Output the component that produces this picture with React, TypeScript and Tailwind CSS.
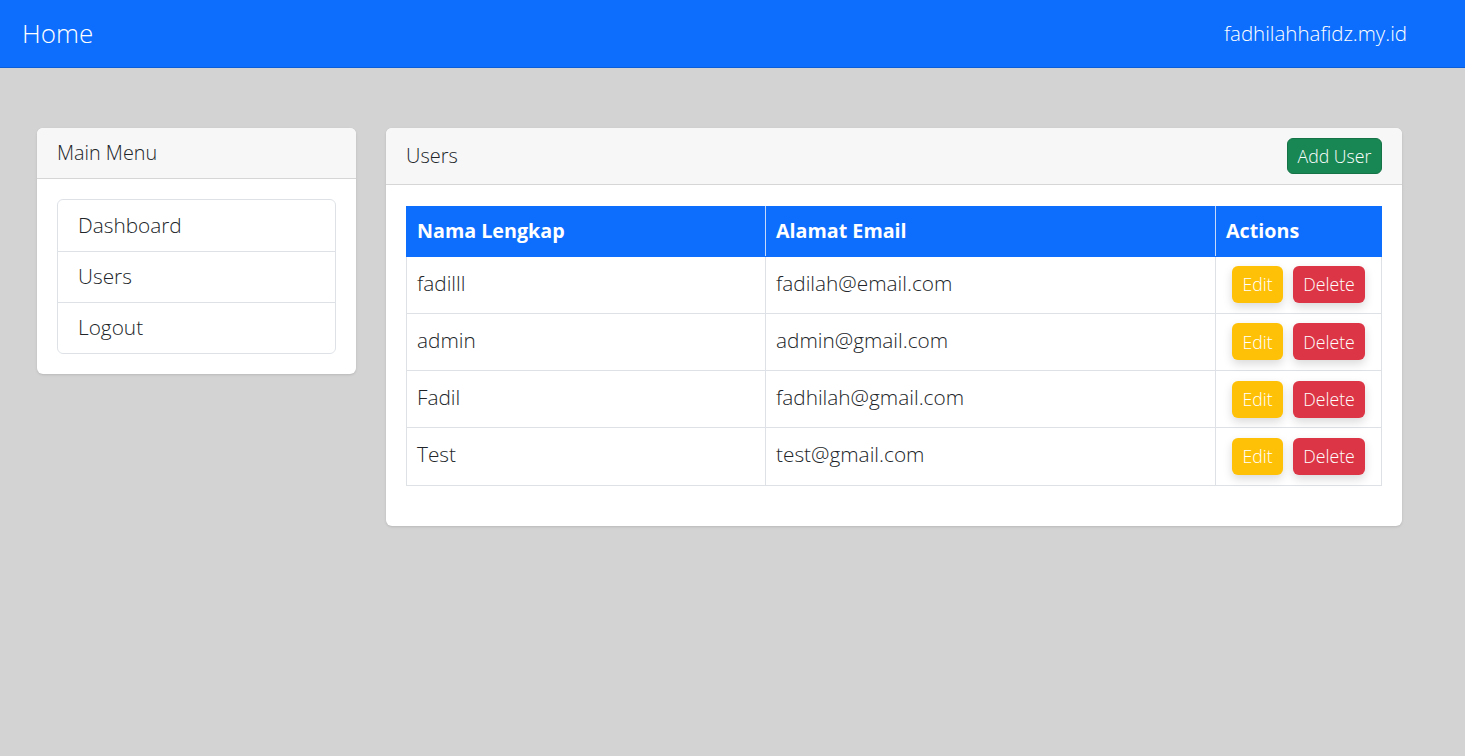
const users = [
    { name: "fadilll", email: "fadilah@email.com" },
    { name: "admin", email: "admin@gmail.com" },
    { name: "Fadil", email: "fadhilah@gmail.com" },
    { name: "Test", email: "test@gmail.com" },
];

const menu = ["Dashboard", "Users", "Logout"];

const App = () => {
    return (
        <div className="min-h-[756px] bg-[#d3d3d3] text-[#212529] font-light" style={{ fontFamily: "'Open Sans', Lato, sans-serif" }}>
            {/* navbar */}
            <div className="h-[68px] bg-[#0d6efd] border-b border-[#0b5ed7] flex items-center justify-between pl-[22px] pr-[58px] text-white">
                <span className="text-[26px]">Home</span>
                <span className="text-[20.5px]">fadhilahhafidz.my.id</span>
            </div>

            <div className="flex items-start gap-[30px] pl-[37px] pt-[60px]">
                {/* sidebar */}
                <div className="w-[319px] bg-white rounded-md shadow-sm overflow-hidden">
                    <div className="h-[51px] bg-[#f7f7f7] border-b border-[#d6d6d6] flex items-center px-[20px] text-[19.8px]">
                        Main Menu
                    </div>
                    <div className="p-[20px]">
                        <div className="border border-[#dee2e6] rounded-md">
                            {menu.map((item, index) => (
                                <div
                                    key={index}
                                    className={`h-[51px] flex items-center px-[20px] text-[20.8px] ${index > 0 ? "border-t border-[#dee2e6]" : ""}`}
                                >
                                    {item}
                                </div>
                            ))}
                        </div>
                    </div>
                </div>

                {/* users card */}
                <div className="w-[1016px] bg-white rounded-md shadow-sm overflow-hidden">
                    <div className="h-[57px] bg-[#f7f7f7] border-b border-[#d6d6d6] flex items-center justify-between px-[20px]">
                        <span className="text-[20px]">Users</span>
                        <button className="h-[36px] w-[95px] rounded-md bg-[#198754] border border-[#157347] text-white text-[17.7px] font-light">
                            Add User
                        </button>
                    </div>
                    <div className="px-[20px] pt-[21px] pb-[40px]">
                        <table className="w-full border-collapse text-[20.8px]">
                            <thead>
                                <tr className="h-[49.5px] bg-[#0d6efd] text-white text-left text-[19.7px]">
                                    <th className="w-[359px] px-[10px] font-bold border border-[#0d6efd] border-r-[#c5d9fb]">Nama Lengkap</th>
                                    <th className="w-[450px] px-[10px] font-bold border border-[#0d6efd] border-r-[#c5d9fb]">Alamat Email</th>
                                    <th className="px-[10px] font-bold border border-[#0d6efd]">Actions</th>
                                </tr>
                            </thead>
                            <tbody>
                                {users.map((user, index) => (
                                    <tr key={index} className="h-[57.3px]">
                                        <td className="border border-[#dee2e6] px-[10px] align-top pt-[11px]">{user.name}</td>
                                        <td className="border border-[#dee2e6] px-[10px] align-top pt-[11px]">{user.email}</td>
                                        <td className="border border-[#dee2e6] pl-[16px]">
                                            <div className="flex gap-[10px]">
                                                <button className="h-[37px] w-[51px] rounded-md bg-[#ffc107] text-white text-[17.7px] font-light shadow-[0_4px_10px_rgba(0,0,0,0.15)]">
                                                    Edit
                                                </button>
                                                <button className="h-[37px] w-[72px] rounded-md bg-[#dc3545] text-white text-[17.7px] font-light shadow-[0_4px_10px_rgba(0,0,0,0.15)]">
                                                    Delete
                                                </button>
                                            </div>
                                        </td>
                                    </tr>
                                ))}
                            </tbody>
                        </table>
                    </div>
                </div>
            </div>
        </div>
    );
};

export default App;
